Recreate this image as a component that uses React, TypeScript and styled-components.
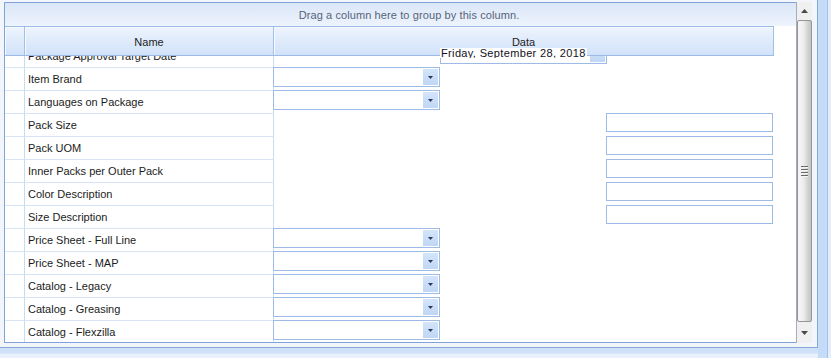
import React from 'react';
import styled, { createGlobalStyle } from 'styled-components';

type FieldKind = 'date' | 'combo' | 'text';

const rows: { name: string; kind: FieldKind }[] = [
  { name: 'Package Approval Target Date', kind: 'date' },
  { name: 'Item Brand', kind: 'combo' },
  { name: 'Languages on Package', kind: 'combo' },
  { name: 'Pack Size', kind: 'text' },
  { name: 'Pack UOM', kind: 'text' },
  { name: 'Inner Packs per Outer Pack', kind: 'text' },
  { name: 'Color Description', kind: 'text' },
  { name: 'Size Description', kind: 'text' },
  { name: 'Price Sheet - Full Line', kind: 'combo' },
  { name: 'Price Sheet - MAP', kind: 'combo' },
  { name: 'Catalog - Legacy', kind: 'combo' },
  { name: 'Catalog - Greasing', kind: 'combo' },
  { name: 'Catalog - Flexzilla', kind: 'combo' },
];

const GlobalStyle = createGlobalStyle`
  html, body {
    margin: 0;
    padding: 0;
  }
  body {
    width: 831px;
    height: 358px;
    overflow: hidden;
    background: #e4edf9;
    font-family: 'Liberation Sans', Arial, sans-serif;
    font-size: 11px;
    color: #1b1b1b;
  }
`;

const DownArrow = () => (
  <svg width="5" height="3" viewBox="0 0 5 3">
    <path d="M0 0H5L2.5 3Z" fill="#243a63" />
  </svg>
);

export default function App() {
  return (
    <Page>
      <GlobalStyle />
      <Main>
        <Frame>
          <GridBody>
            <GroupPanel>Drag a column here to group by this column.</GroupPanel>
            <HeaderStrip>
              <HeaderCell $width={20} />
              <HeaderCell $width={249}>Name</HeaderCell>
              <HeaderCell $width={500}>Data</HeaderCell>
            </HeaderStrip>
            <Body>
              <Rows>
                {rows.map((r) => (
                  <Row key={r.name}>
                    <IndicatorCell />
                    <NameCell>{r.name}</NameCell>
                    <DataCell>
                      {r.kind === 'combo' && (
                        <Combo>
                          <ComboButton>
                            <DownArrow />
                          </ComboButton>
                        </Combo>
                      )}
                      {r.kind === 'text' && <TextBox />}
                      {r.kind === 'date' && (
                        <DateBox>
                          <DateButton />
                        </DateBox>
                      )}
                    </DataCell>
                  </Row>
                ))}
              </Rows>
            </Body>
            <DateOverlay>Friday, September 28, 2018</DateOverlay>
          </GridBody>
          <ScrollBar>
            <ScrollButton $h={18}>
              <svg width="7" height="4" viewBox="0 0 7 4">
                <path d="M0 4H7L3.5 0Z" fill="#4a4a4a" />
              </svg>
            </ScrollButton>
            <Track>
              <Thumb>
                <Grip />
                <Grip />
                <Grip />
                <Grip />
              </Thumb>
            </Track>
            <ScrollButton $h={21}>
              <svg width="7" height="4" viewBox="0 0 7 4">
                <path d="M0 0H7L3.5 4Z" fill="#4a4a4a" />
              </svg>
            </ScrollButton>
          </ScrollBar>
        </Frame>
        <BottomStrip />
      </Main>
      <RightBand />
    </Page>
  );
}

const Page = styled.div`
  display: flex;
  width: 831px;
  height: 358px;
`;

const Main = styled.div`
  display: flex;
  flex-direction: column;
  width: 818px;
`;

const Frame = styled.div`
  box-sizing: border-box;
  display: flex;
  height: 348px;
  padding: 2px 5px 4px 4px;
  background: #f2f6fc;
  border-right: 1px solid #86a9d8;
  border-bottom: 1px solid #86a9d8;
`;

const BottomStrip = styled.div`
  flex: 1;
  background: linear-gradient(#d0e1f7 0, #d0e1f7 5px, #e8f0fb 6px);
`;

const RightBand = styled.div`
  width: 13px;
  background: linear-gradient(
    90deg,
    #c5dcf8 0,
    #c5dcf8 9px,
    #a4c2ea 9px,
    #a4c2ea 10px,
    #e4edf9 10px
  );
`;

const GridBody = styled.div`
  position: relative;
  box-sizing: border-box;
  display: flex;
  flex-direction: column;
  width: 792px;
  height: 341px;
  background: #ffffff;
  border: 1px solid #7fa4d5;
  border-right: none;
`;

const GroupPanel = styled.div`
  height: 23px;
  padding-left: 17px;
  display: flex;
  align-items: center;
  justify-content: center;
  background: linear-gradient(#dae6f7, #eef4fd);
  color: #56647a;
  letter-spacing: 0.1px;
`;

const HeaderStrip = styled.div`
  display: flex;
  width: 769px;
  height: 28px;
  border-top: 1px solid #9dbbe5;
  border-bottom: 1px solid #9dbbe5;
`;

const HeaderCell = styled.div<{ $width: number }>`
  box-sizing: border-box;
  width: ${(p) => p.$width}px;
  display: flex;
  align-items: center;
  justify-content: center;
  padding-top: 2px;
  background: linear-gradient(#edf4fd, #d1e2f9);
  border-right: 1px solid #a2bfe6;
  box-shadow: inset 1px 1px 0 #f7fbff;
  color: #1d1d1d;
`;

const Body = styled.div`
  flex: 1;
  overflow: hidden;
`;

const Rows = styled.div`
  margin-top: -12px;
`;

const Row = styled.div`
  display: flex;
  height: 23px;
`;

const IndicatorCell = styled.div`
  box-sizing: border-box;
  width: 20px;
  border-top: 1px solid #d6e4f6;
  border-right: 1px solid #c9dbf2;
`;

const NameCell = styled.div`
  box-sizing: border-box;
  width: 249px;
  padding-left: 3px;
  display: flex;
  align-items: center;
  white-space: nowrap;
  border-top: 1px solid #d6e4f6;
  border-right: 1px solid #c9dbf2;
`;

const DataCell = styled.div`
  width: 499px;
  display: flex;
  align-items: flex-start;
`;

const Combo = styled.div`
  box-sizing: border-box;
  width: 167px;
  height: 20px;
  margin-left: -1px;
  display: flex;
  justify-content: flex-end;
  padding: 1px;
  background: #ffffff;
  border: 1px solid #9dbbe6;
`;

const ComboButton = styled.div`
  width: 15px;
  display: flex;
  align-items: center;
  justify-content: center;
  background: linear-gradient(#d4e5fa, #c0d6f4);
`;

const TextBox = styled.div`
  box-sizing: border-box;
  width: 167px;
  height: 19px;
  margin-left: 332px;
  background: #ffffff;
  border: 1px solid #9dbbe6;
`;

const DateBox = styled(Combo)`
  margin-left: 166px;
`;

const DateButton = styled.div`
  width: 15px;
  background: linear-gradient(#d4e5fa, #c0d6f4);
`;

const DateOverlay = styled.div`
  position: absolute;
  left: 435px;
  top: 45px;
  width: 146px;
  height: 10px;
  padding-left: 1px;
  overflow: hidden;
  line-height: 11px;
  letter-spacing: 0.35px;
  white-space: nowrap;
  background: #ffffff;
  color: #111122;
`;

const ScrollBar = styled.div`
  box-sizing: border-box;
  width: 16px;
  height: 341px;
  display: flex;
  flex-direction: column;
  background: #ededed;
  border-left: 1px solid #a4adba;
`;

const ScrollButton = styled.div<{ $h: number }>`
  height: ${(p) => p.$h}px;
  display: flex;
  align-items: center;
  justify-content: center;
  background: #f0f0f0;
`;

const Track = styled.div`
  flex: 1;
  display: flex;
`;

const Thumb = styled.div`
  box-sizing: border-box;
  flex: 1;
  display: flex;
  flex-direction: column;
  align-items: center;
  justify-content: center;
  gap: 1px;
  border: 1px solid #969696;
  border-radius: 2px;
  background: linear-gradient(90deg, #f7f7f7 0%, #ececec 45%, #d3d3d3 75%, #c3c3c3 100%);
`;

const Grip = styled.div`
  width: 7px;
  height: 1px;
  background: #6a6a6a;
  border-bottom: 1px solid #f4f4f4;
`;
